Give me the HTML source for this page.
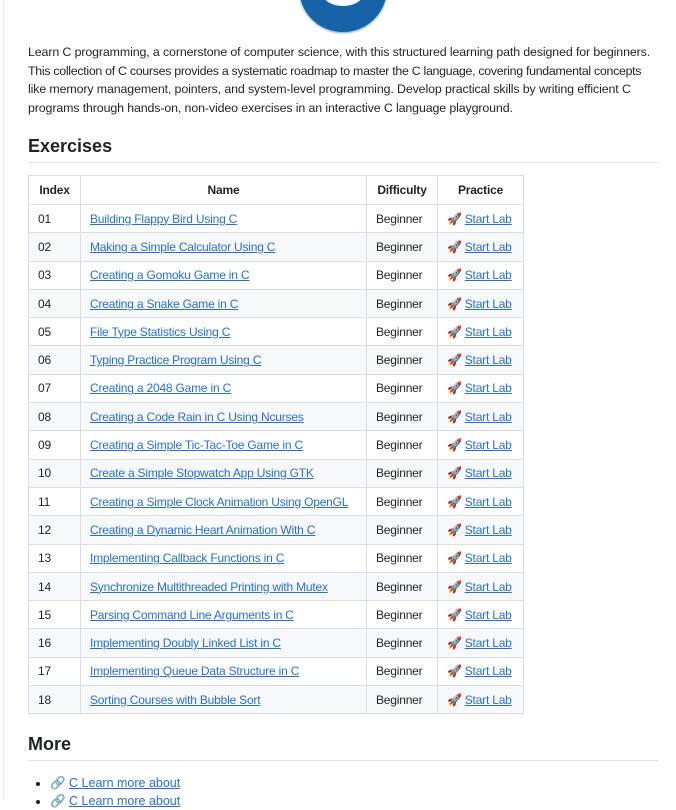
<!DOCTYPE html>
<html><head><meta charset="utf-8"><style>
html,body{margin:0;padding:0;background:#fff;}
body{width:676px;height:800px;overflow:hidden;position:relative;font-family:"Liberation Sans",sans-serif;color:#1f2328;}
.lb{position:absolute;left:3px;top:0;width:1px;height:800px;background:#e6e8eb;}
.logo{position:absolute;left:299px;top:-56px;width:88px;height:88px;border-radius:50%;background:#1663a8;box-shadow:0 1px 2px #5aa0dd;overflow:hidden;}
.logo:after{content:"";position:absolute;left:24px;top:38px;width:40px;height:24px;background:#fff;border-radius:0 0 50% 50%;}
p{position:absolute;left:28px;top:43px;width:640px;margin:0;font-size:12.4px;line-height:18.7px;letter-spacing:-0.12px;white-space:nowrap;}
h2{position:absolute;left:28px;margin:0;font-size:18px;font-weight:600;width:630px;border-bottom:1px solid #e1e4e8;padding-bottom:5px;}
table{position:absolute;left:28px;top:175px;border-collapse:collapse;font-size:12px;letter-spacing:-0.2px;}
td,th{border:1px solid #d8dee4;height:27.3px;padding:0 9px;white-space:nowrap;}
th{font-weight:600;height:28px;}
tr:nth-child(odd) td{background:#f6f8fa;}
a{color:#2a6fd0;text-decoration:underline;}
.r{font-size:12px;margin-right:3px;}
ul{position:absolute;left:28px;top:774px;margin:0;padding-left:22px;font-size:12.5px;line-height:18px;}
</style></head><body>
<div class="lb"></div>
<div class="logo"></div>
<p>Learn C programming, a cornerstone of computer science, with this structured learning path designed for beginners.<br><span style="letter-spacing:-0.3px">This collection of C courses provides a systematic roadmap to master the C language, covering fundamental concepts</span><br>like memory management, pointers, and system-level programming. Develop practical skills by writing efficient C<br>programs through hands-on, non-video exercises in an interactive C language playground.</p>
<h2 style="top:136px">Exercises</h2>
<table>
<tr><th style="width:33px">Index</th><th style="width:267px">Name</th><th style="width:52px">Difficulty</th><th style="width:67px">Practice</th></tr>
<tr><td>01</td><td><a>Building Flappy Bird Using C</a></td><td>Beginner</td><td><span class="r">🚀</span><a>Start Lab</a></td></tr>
<tr><td>02</td><td><a>Making a Simple Calculator Using C</a></td><td>Beginner</td><td><span class="r">🚀</span><a>Start Lab</a></td></tr>
<tr><td>03</td><td><a>Creating a Gomoku Game in C</a></td><td>Beginner</td><td><span class="r">🚀</span><a>Start Lab</a></td></tr>
<tr><td>04</td><td><a>Creating a Snake Game in C</a></td><td>Beginner</td><td><span class="r">🚀</span><a>Start Lab</a></td></tr>
<tr><td>05</td><td><a>File Type Statistics Using C</a></td><td>Beginner</td><td><span class="r">🚀</span><a>Start Lab</a></td></tr>
<tr><td>06</td><td><a>Typing Practice Program Using C</a></td><td>Beginner</td><td><span class="r">🚀</span><a>Start Lab</a></td></tr>
<tr><td>07</td><td><a>Creating a 2048 Game in C</a></td><td>Beginner</td><td><span class="r">🚀</span><a>Start Lab</a></td></tr>
<tr><td>08</td><td><a>Creating a Code Rain in C Using Ncurses</a></td><td>Beginner</td><td><span class="r">🚀</span><a>Start Lab</a></td></tr>
<tr><td>09</td><td><a>Creating a Simple Tic-Tac-Toe Game in C</a></td><td>Beginner</td><td><span class="r">🚀</span><a>Start Lab</a></td></tr>
<tr><td>10</td><td><a>Create a Simple Stopwatch App Using GTK</a></td><td>Beginner</td><td><span class="r">🚀</span><a>Start Lab</a></td></tr>
<tr><td>11</td><td><a>Creating a Simple Clock Animation Using OpenGL</a></td><td>Beginner</td><td><span class="r">🚀</span><a>Start Lab</a></td></tr>
<tr><td>12</td><td><a>Creating a Dynamic Heart Animation With C</a></td><td>Beginner</td><td><span class="r">🚀</span><a>Start Lab</a></td></tr>
<tr><td>13</td><td><a>Implementing Callback Functions in C</a></td><td>Beginner</td><td><span class="r">🚀</span><a>Start Lab</a></td></tr>
<tr><td>14</td><td><a>Synchronize Multithreaded Printing with Mutex</a></td><td>Beginner</td><td><span class="r">🚀</span><a>Start Lab</a></td></tr>
<tr><td>15</td><td><a>Parsing Command Line Arguments in C</a></td><td>Beginner</td><td><span class="r">🚀</span><a>Start Lab</a></td></tr>
<tr><td>16</td><td><a>Implementing Doubly Linked List in C</a></td><td>Beginner</td><td><span class="r">🚀</span><a>Start Lab</a></td></tr>
<tr><td>17</td><td><a>Implementing Queue Data Structure in C</a></td><td>Beginner</td><td><span class="r">🚀</span><a>Start Lab</a></td></tr>
<tr><td>18</td><td><a>Sorting Courses with Bubble Sort</a></td><td>Beginner</td><td><span class="r">🚀</span><a>Start Lab</a></td></tr>
</table>
<h2 style="top:734px">More</h2>
<ul><li>🔗 <a>C Learn more about</a></li><li>🔗 <a>C Learn more about</a></li></ul>
</body></html>
